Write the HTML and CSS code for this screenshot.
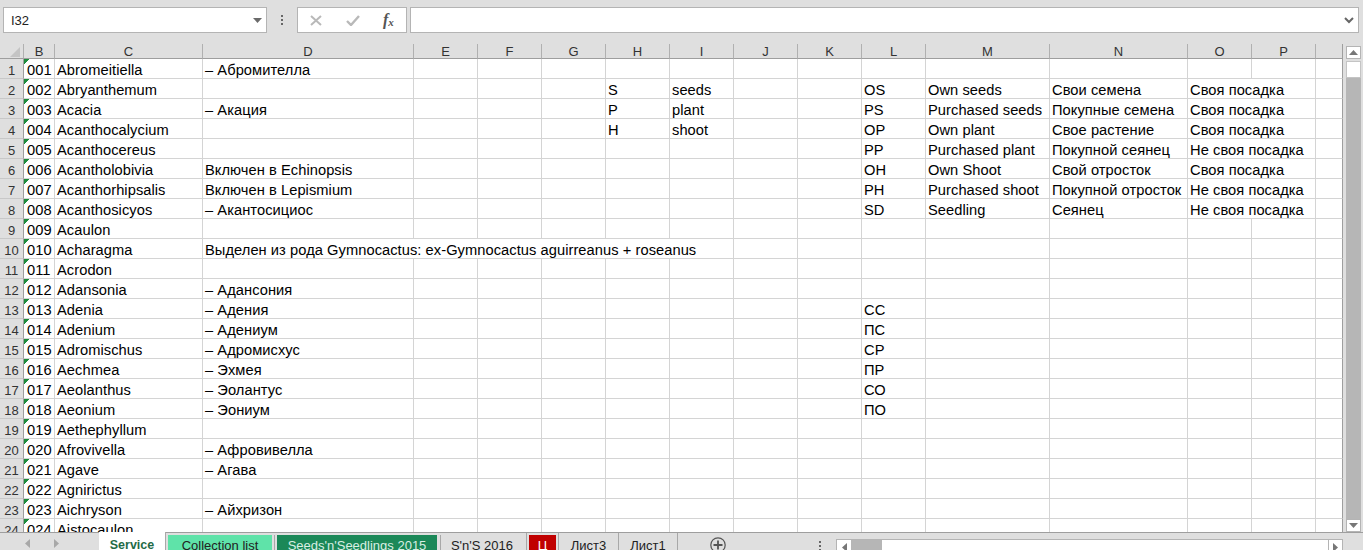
FILE: index.html
```html
<!DOCTYPE html>
<html lang="ru">
<head>
<meta charset="utf-8">
<title>Service</title>
<link rel="stylesheet" href="styles.css">
</head>
<body>
<div class="app">
  <header class="fbar">
    <div class="namebox"><span class="nameval">I32</span><svg class="caret" width="9" height="5" viewBox="0 0 9 5"><path d="M0 0h9L4.500 5z" fill="#6a6a6a"/></svg></div>
    <div class="grip"><i></i><i></i><i></i></div>
    <div class="fbtns">
      <svg width="12" height="11" viewBox="0 0 12 11"><path d="M1 1l10 9M11 1L1 10" stroke="#b9b9b9" stroke-width="2" fill="none"/></svg>
      <svg width="14" height="11" viewBox="0 0 14 11"><path d="M1 6l4 4 8-9" stroke="#b9b9b9" stroke-width="2.400" fill="none"/></svg>
      <span class="fx">f<sub>x</sub></span>
    </div>
    <div class="finput"><svg width="10" height="7" viewBox="0 0 10 7"><path d="M1 1l4 4 4-4" stroke="#666" stroke-width="2" fill="none"/></svg></div>
  </header>
  <main class="work">
    <div class="sheet">
      <table class="grid">
        <colgroup><col class="c0"><col class="cb"><col class="cc"><col class="cd"><col class="cn"><col class="cn"><col class="cn"><col class="cn"><col class="cn"><col class="cn"><col class="cn"><col class="cn"><col class="cm"><col class="cnn"><col class="cn"><col class="cn"><col class="cq"></colgroup>
        <thead><tr><th class="corner"><svg width="11" height="10" viewBox="0 0 11 10"><path d="M10 0v10H0z" fill="#c4c4c4"/></svg></th><th>B</th><th>C</th><th>D</th><th>E</th><th>F</th><th>G</th><th>H</th><th>I</th><th>J</th><th>K</th><th>L</th><th>M</th><th>N</th><th>O</th><th>P</th><th></th></tr></thead>
        <tbody>
          <tr><th>1</th><td class="flag">001</td><td>Abromeitiella</td><td>– Абромителла</td><td></td><td></td><td></td><td></td><td></td><td></td><td></td><td></td><td></td><td></td><td></td><td></td><td></td></tr>
          <tr><th>2</th><td class="flag">002</td><td>Abryanthemum</td><td></td><td></td><td></td><td></td><td>S</td><td>seeds</td><td></td><td></td><td>OS</td><td>Own seeds</td><td>Свои семена</td><td colspan="2">Своя посадка</td><td></td></tr>
          <tr><th>3</th><td class="flag">003</td><td>Acacia</td><td>– Акация</td><td></td><td></td><td></td><td>P</td><td>plant</td><td></td><td></td><td>PS</td><td>Purchased seeds</td><td>Покупные семена</td><td colspan="2">Своя посадка</td><td></td></tr>
          <tr><th>4</th><td class="flag">004</td><td>Acanthocalycium</td><td></td><td></td><td></td><td></td><td>H</td><td>shoot</td><td></td><td></td><td>OP</td><td>Own plant</td><td>Свое растение</td><td colspan="2">Своя посадка</td><td></td></tr>
          <tr><th>5</th><td class="flag">005</td><td>Acanthocereus</td><td></td><td></td><td></td><td></td><td></td><td></td><td></td><td></td><td>PP</td><td>Purchased plant</td><td>Покупной сеянец</td><td colspan="2">Не своя посадка</td><td></td></tr>
          <tr><th>6</th><td class="flag">006</td><td>Acantholobivia</td><td>Включен в Echinopsis</td><td></td><td></td><td></td><td></td><td></td><td></td><td></td><td>OH</td><td>Own Shoot</td><td>Свой отросток</td><td colspan="2">Своя посадка</td><td></td></tr>
          <tr><th>7</th><td class="flag">007</td><td>Acanthorhipsalis</td><td>Включен в Lepismium</td><td></td><td></td><td></td><td></td><td></td><td></td><td></td><td>PH</td><td>Purchased shoot</td><td>Покупной отросток</td><td colspan="2">Не своя посадка</td><td></td></tr>
          <tr><th>8</th><td class="flag">008</td><td>Acanthosicyos</td><td>– Акантосициос</td><td></td><td></td><td></td><td></td><td></td><td></td><td></td><td>SD</td><td>Seedling</td><td>Сеянец</td><td colspan="2">Не своя посадка</td><td></td></tr>
          <tr><th>9</th><td class="flag">009</td><td>Acaulon</td><td></td><td></td><td></td><td></td><td></td><td></td><td></td><td></td><td></td><td></td><td></td><td></td><td></td><td></td></tr>
          <tr><th>10</th><td class="flag">010</td><td>Acharagma</td><td colspan="6">Выделен из рода Gymnocactus: ex-Gymnocactus aguirreanus + roseanus</td><td></td><td></td><td></td><td></td><td></td><td></td><td></td><td></td></tr>
          <tr><th>11</th><td class="flag">011</td><td>Acrodon</td><td></td><td></td><td></td><td></td><td></td><td></td><td></td><td></td><td></td><td></td><td></td><td></td><td></td><td></td></tr>
          <tr><th>12</th><td class="flag">012</td><td>Adansonia</td><td>– Адансония</td><td></td><td></td><td></td><td></td><td></td><td></td><td></td><td></td><td></td><td></td><td></td><td></td><td></td></tr>
          <tr><th>13</th><td class="flag">013</td><td>Adenia</td><td>– Адения</td><td></td><td></td><td></td><td></td><td></td><td></td><td></td><td>СС</td><td></td><td></td><td></td><td></td><td></td></tr>
          <tr><th>14</th><td class="flag">014</td><td>Adenium</td><td>– Адениум</td><td></td><td></td><td></td><td></td><td></td><td></td><td></td><td>ПС</td><td></td><td></td><td></td><td></td><td></td></tr>
          <tr><th>15</th><td class="flag">015</td><td>Adromischus</td><td>– Адромисхус</td><td></td><td></td><td></td><td></td><td></td><td></td><td></td><td>СР</td><td></td><td></td><td></td><td></td><td></td></tr>
          <tr><th>16</th><td class="flag">016</td><td>Aechmea</td><td>– Эхмея</td><td></td><td></td><td></td><td></td><td></td><td></td><td></td><td>ПР</td><td></td><td></td><td></td><td></td><td></td></tr>
          <tr><th>17</th><td class="flag">017</td><td>Aeolanthus</td><td>– Эолантус</td><td></td><td></td><td></td><td></td><td></td><td></td><td></td><td>СО</td><td></td><td></td><td></td><td></td><td></td></tr>
          <tr><th>18</th><td class="flag">018</td><td>Aeonium</td><td>– Эониум</td><td></td><td></td><td></td><td></td><td></td><td></td><td></td><td>ПО</td><td></td><td></td><td></td><td></td><td></td></tr>
          <tr><th>19</th><td class="flag">019</td><td>Aethephyllum</td><td></td><td></td><td></td><td></td><td></td><td></td><td></td><td></td><td></td><td></td><td></td><td></td><td></td><td></td></tr>
          <tr><th>20</th><td class="flag">020</td><td>Afrovivella</td><td>– Афровивелла</td><td></td><td></td><td></td><td></td><td></td><td></td><td></td><td></td><td></td><td></td><td></td><td></td><td></td></tr>
          <tr><th>21</th><td class="flag">021</td><td>Agave</td><td>– Агава</td><td></td><td></td><td></td><td></td><td></td><td></td><td></td><td></td><td></td><td></td><td></td><td></td><td></td></tr>
          <tr><th>22</th><td class="flag">022</td><td>Agnirictus</td><td></td><td></td><td></td><td></td><td></td><td></td><td></td><td></td><td></td><td></td><td></td><td></td><td></td><td></td></tr>
          <tr><th>23</th><td class="flag">023</td><td>Aichryson</td><td>– Айхризон</td><td></td><td></td><td></td><td></td><td></td><td></td><td></td><td></td><td></td><td></td><td></td><td></td><td></td></tr>
          <tr><th>24</th><td class="flag">024</td><td>Aistocaulon</td><td></td><td></td><td></td><td></td><td></td><td></td><td></td><td></td><td></td><td></td><td></td><td></td><td></td><td></td></tr>
        </tbody>
      </table>
    </div>
    <aside class="vscroll">
      <div class="sbtn"><svg width="9" height="5" viewBox="0 0 9 5"><path d="M4.500 0L9 5H0z" fill="#777"/></svg></div>
      <div class="vthumb"></div>
      <div class="vtrack"></div>
      <div class="sbtn"><svg width="9" height="5" viewBox="0 0 9 5"><path d="M0 0h9L4.500 5z" fill="#777"/></svg></div>
    </aside>
  </main>
  <footer class="tabbar">
    <div class="navs">
      <svg width="5" height="9" viewBox="0 0 5 9"><path d="M5 0v9L0 4.500z" fill="#a8a8a8"/></svg>
      <svg width="5" height="9" viewBox="0 0 5 9"><path d="M0 0v9l5-4.500z" fill="#a8a8a8"/></svg>
    </div>
    <div class="tab active">Service</div>
    <div class="tab mint">Collection list</div>
    <div class="tab forest">Seeds'n'Seedlings 2015</div>
    <div class="tab plain s16">S'n'S 2016</div>
    <div class="tab red">Ц</div>
    <div class="tab plain l3">Лист3</div>
    <div class="tab plain l1">Лист1</div>
    <div class="addwrap"><svg width="16" height="16" viewBox="0 0 16 16"><circle cx="8" cy="8" r="7.200" fill="none" stroke="#555" stroke-width="1.200"/><path d="M8 3.500v9M3.500 8h9" stroke="#555" stroke-width="1.800"/></svg></div>
    <div class="grip small"><i></i><i></i><i></i></div>
    <div class="hscroll">
      <div class="hbtn"><svg width="5" height="9" viewBox="0 0 5 9"><path d="M5 0v9L0 4.500z" fill="#777"/></svg></div>
      <div class="hthumb"></div>
      <div class="htrack"></div>
      <div class="hbtn end"><svg width="5" height="9" viewBox="0 0 5 9"><path d="M0 0v9l5-4.500z" fill="#777"/></svg></div>
    </div>
  </footer>
</div>
</body>
</html>
```
FILE: styles.css
```css
* { box-sizing: border-box; }
html, body { margin: 0; padding: 0; height: 100%; overflow: hidden; }
body { font-family: "Liberation Sans", Arial, sans-serif; background: #dfdfdf; color: #000; }
.app { width: 1363px; height: 550px; display: flex; flex-direction: column; overflow: hidden; }

.fbar { height: 44px; flex: none; display: flex; align-items: flex-start; padding: 7px 4px 0 3px; }
.namebox { width: 264px; height: 26px; background: #fff; border: 1px solid #b4b4b4; display: flex; align-items: center; justify-content: space-between; padding: 0 4px 0 7px; font-size: 13px; color: #222; }
.grip { width: 30px; height: 26px; display: flex; flex-direction: column; align-items: center; justify-content: center; gap: 2px; }
.grip i { display: block; width: 2px; height: 2px; background: #666; }
.fbtns { width: 110px; height: 26px; background: #fff; border: 1px solid #b4b4b4; display: flex; align-items: center; gap: 24px; padding-left: 12px; }
.fx { font-family: "Liberation Serif", serif; font-style: italic; font-weight: 700; font-size: 16px; color: #555; line-height: 1; margin-left: -1px; }
.fx sub { font-size: 11px; vertical-align: -1px; line-height: 0; }
.finput { width: 949px; height: 26px; margin-left: 3px; background: #fff; border: 1px solid #b4b4b4; display: flex; align-items: center; justify-content: flex-end; padding-right: 4px; }

.work { flex: 1; min-height: 0; display: flex; background: #dfdfdf; }
.sheet { width: 1343px; height: 488px; overflow: hidden; flex: none; background: #fff; }
.grid { table-layout: fixed; width: 1343px; border-collapse: separate; border-spacing: 0; font-size: 14.67px; letter-spacing: 0.06px; }
.c0 { width: 24px; } .cb { width: 31px; } .cc { width: 148px; } .cd { width: 211px; }
.cn { width: 64px; } .cm { width: 124px; } .cnn { width: 138px; } .cq { width: 27px; }
.grid thead th { height: 15px; padding: 1px 0 0; background: #dfdfdf; border-right: 1px solid #b0b0b0; border-bottom: 1px solid #9e9e9e; font-weight: 400; font-size: 13px; line-height: 13px; color: #333; text-align: center; letter-spacing: 0; }
.grid thead th:last-child { border-right: 1px solid #9e9e9e; }
.grid .corner { text-align: right; padding: 2px 2px 0 0; line-height: 0; overflow: hidden; }
.grid tbody th { height: 20px; padding: 4px 0 0; background: #dfdfdf; border-right: 1px solid #9e9e9e; border-bottom: 1px solid #c8c8c8; font-weight: 400; font-size: 13px; line-height: 15px; color: #333; text-align: center; letter-spacing: 0; }
.grid td { height: 20px; padding: 3px 2px 0; border-right: 1px solid #d4d4d4; border-bottom: 1px solid #d4d4d4; line-height: 16px; white-space: nowrap; overflow: visible; vertical-align: middle; }
.grid tbody td:last-child { border-right: 1px solid #9e9e9e; }
.grid .flag { padding-left: 3px; background: linear-gradient(135deg, #1e8c3c 0, #1e8c3c 4px, transparent 4px) no-repeat; }

.vscroll { width: 20px; height: 488px; padding: 2px 2px 0 3px; display: flex; flex-direction: column; }
.sbtn { height: 13px; flex: none; background: #fff; border: 1px solid #b4b4b4; display: flex; align-items: center; justify-content: center; }
.vthumb { height: 17px; flex: none; margin-top: 2px; background: #fff; border: 1px solid #c4c4c4; }
.vtrack { flex: 1; background: #b6b6b6; }

.tabbar { height: 18px; flex: none; display: flex; align-items: flex-start; border-top: 1px solid #9e9e9e; font-size: 13px; position: relative; }
.navs { width: 99px; height: 17px; display: flex; gap: 24px; padding: 6px 0 0 25px; flex: none; }
.tab { height: 17px; line-height: 25px; text-align: center; white-space: nowrap; overflow: hidden; flex: none; color: #222; }
.active { width: 67px; margin-top: -1px; height: 18px; line-height: 27px; background: #fff; color: #1f6b47; font-weight: 700; font-size: 12.500px; margin-right: 2px; border-right: 1px solid #a8a8a8; }
.mint { width: 104px; margin-top: 2px; height: 15px; line-height: 21px; background: #5fe3a9; margin-right: 5px; box-shadow: 2px 0 0 #dfdfdf, 3px 0 0 #a8a8a8; }
.forest { width: 160px; margin-top: 2px; height: 15px; line-height: 21px; background: #1b8858; color: #d8eee3; margin-right: 4px; box-shadow: 3px 0 0 #dfdfdf, 4px 0 0 #a8a8a8; }
.plain { border-right: 1px solid #a8a8a8; }
.s16 { width: 86px; padding-right: 3px; }
.red { width: 27px; margin: 2px 2px 0; height: 15px; line-height: 21px; background: #c00000; color: #fff; }
.l3 { width: 61px; border-left: 1px solid #a8a8a8; }
.l1 { width: 59px; }
.addwrap { width: 16px; height: 16px; margin: 4px 0 0 32px; flex: none; }
.grip.small { width: 16px; height: 16px; margin: 2px 0 0 86px; justify-content: flex-start; padding-top: 6px; gap: 2px; flex: none; }
.hscroll { position: absolute; left: 836px; top: 6px; width: 507px; height: 12px; display: flex; background: #fff; border: 1px solid #b4b4b4; border-bottom: 0; }
.hbtn { width: 14px; flex: none; display: flex; align-items: center; justify-content: center; padding-top: 4px; }
.hbtn.end { border-left: 1px solid #b4b4b4; }
.hthumb { width: 31px; background: #b6b6b6; flex: none; }
.htrack { flex: 1; }
```
